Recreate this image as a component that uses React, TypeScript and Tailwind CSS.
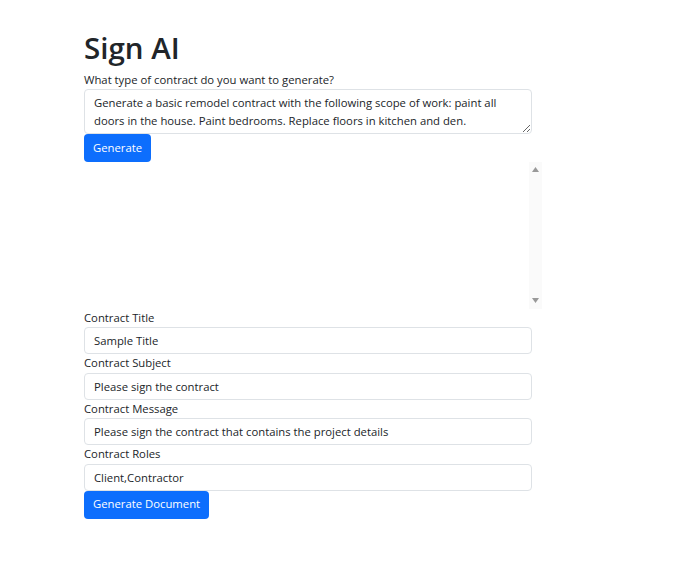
const fields = [
  { label: "Contract Title", value: "Sample Title" },
  { label: "Contract Subject", value: "Please sign the contract" },
  { label: "Contract Message", value: "Please sign the contract that contains the project details" },
  { label: "Contract Roles", value: "Client,Contractor" },
];

const App = () => {
  return (
    <div className="min-h-screen bg-white text-[#212529] text-[11.3px] font-['Open_Sans','Noto_Sans',sans-serif]">
      <div className="pl-[84px] pt-[29px]">
        <h1 className="text-[29.5px] leading-[37px] font-semibold mb-[5px]">Sign AI</h1>
        <label className="block leading-[18px]">What type of contract do you want to generate?</label>
        <textarea
          className="block w-[448px] h-[45px] border border-[#dee2e6] rounded-[4px] px-[9px] py-[4px] leading-[18px] outline-none"
          defaultValue="Generate a basic remodel contract with the following scope of work: paint all doors in the house. Paint bedrooms. Replace floors in kitchen and den."
        />
        <button className="block h-[28px] px-[9px] rounded-[4px] bg-[#0d6efd] text-white">Generate</button>
        {/* output preview with its scrollbar */}
        <div className="h-[147px] w-[458px] flex">
          <div className="flex-1"></div>
          <div className="w-[13px] bg-[#fafafa] flex flex-col items-center justify-between pt-[4px] pb-[5px]">
            <svg width="9" height="7" viewBox="0 0 9 7">
              <path d="M4.5 1 L8 6 L1 6 Z" fill="#999999" />
            </svg>
            <svg width="9" height="7" viewBox="0 0 9 7">
              <path d="M1 1 L8 1 L4.5 6 Z" fill="#999999" />
            </svg>
          </div>
        </div>
        {fields.map((f) => (
          <div key={f.label}>
            <label className="block leading-[18.4px]">{f.label}</label>
            <input
              className="block w-[448px] h-[27px] border border-[#dee2e6] rounded-[4px] px-[9px] outline-none"
              defaultValue={f.value}
            />
          </div>
        ))}
        <button className="block h-[28px] px-[9px] rounded-[4px] bg-[#0d6efd] text-white">Generate Document</button>
      </div>
    </div>
  );
};

export default App;
